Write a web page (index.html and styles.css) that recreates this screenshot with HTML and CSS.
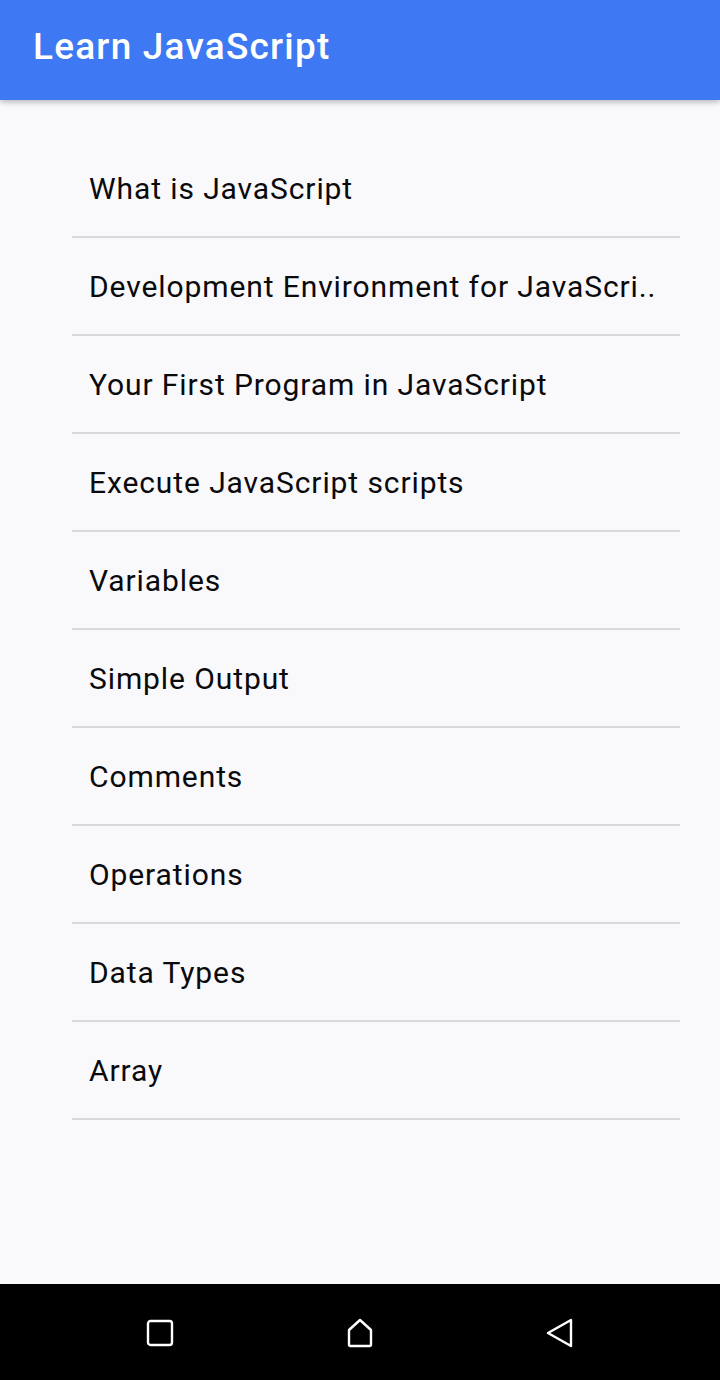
FILE: index.html
```html
<!DOCTYPE html>
<html>
<head>
<meta charset="utf-8">
<link rel="stylesheet" href="styles.css">
</head>
<body>
<div class="screen">
  <header class="appbar"><h1 class="title">Learn JavaScript</h1></header>
  <main class="content">
    <ul class="list">
      <li class="item"><span class="label">What is JavaScript</span></li>
      <li class="item"><span class="label">Development Environment for JavaScri..</span></li>
      <li class="item"><span class="label">Your First Program in JavaScript</span></li>
      <li class="item"><span class="label">Execute JavaScript scripts</span></li>
      <li class="item"><span class="label">Variables</span></li>
      <li class="item"><span class="label">Simple Output</span></li>
      <li class="item"><span class="label">Comments</span></li>
      <li class="item"><span class="label">Operations</span></li>
      <li class="item"><span class="label">Data Types</span></li>
      <li class="item"><span class="label">Array</span></li>
    </ul>
  </main>
  <nav class="navbar">
    <svg class="nav-icon" viewBox="0 0 28 28" width="28" height="28"><rect x="2" y="2" width="24" height="24" rx="2.5" fill="none" stroke="#fff" stroke-width="2.4"/></svg>
    <svg class="nav-icon" viewBox="0 0 28 30" width="28" height="30"><path d="M3 12 L14 2 L25 12 V26.5 Q25 28 23.5 28 H4.5 Q3 28 3 26.5 Z" fill="none" stroke="#fff" stroke-width="2.4" stroke-linejoin="round"/></svg>
    <svg class="nav-icon" viewBox="0 0 28 30" width="28" height="30"><path d="M25 2 V28 L2 15 Z" fill="none" stroke="#fff" stroke-width="2.4" stroke-linejoin="round"/></svg>
  </nav>
</div>
</body>
</html>
```
FILE: styles.css
```css
html, body {
  margin: 0;
  padding: 0;
}
body {
  font-family: Roboto, "Liberation Sans", sans-serif;
  background: #f9f8fb;
}
.screen {
  width: 720px;
  height: 1380px;
  display: flex;
  flex-direction: column;
  overflow: hidden;
}
.appbar {
  height: 100px;
  background: #3e78f2;
  display: flex;
  align-items: center;
  padding-left: 33px;
  box-shadow: 0 2px 6px rgba(0,0,0,0.28);
  position: relative;
  z-index: 1;
  flex-shrink: 0;
}
.title {
  margin: 0;
  margin-top: -8px;
  color: #fff;
  font-size: 37px;
  font-weight: 500;
  letter-spacing: 1.2px;
}
.content {
  flex: 1;
  background: #f9f8fb;
  padding: 40px 40px 0 72px;
}
.list {
  list-style: none;
  margin: 0;
  padding: 0;
}
.item {
  height: 96px;
  border-bottom: 2px solid #d9d8dc;
  display: flex;
  align-items: center;
  padding-left: 17px;
}
.label {
  font-size: 30px;
  letter-spacing: 0.9px;
  color: #0a0a0c;
  white-space: nowrap;
}
.navbar {
  height: 96px;
  background: #000;
  display: flex;
  align-items: center;
  flex-shrink: 0;
  padding-top: 2px;
  box-sizing: border-box;
}
.nav-icon {
  display: block;
}
.nav-icon:nth-child(1) { margin-left: 146px; }
.nav-icon:nth-child(2) { margin-left: 172px; }
.nav-icon:nth-child(3) { margin-left: 172px; }
```
